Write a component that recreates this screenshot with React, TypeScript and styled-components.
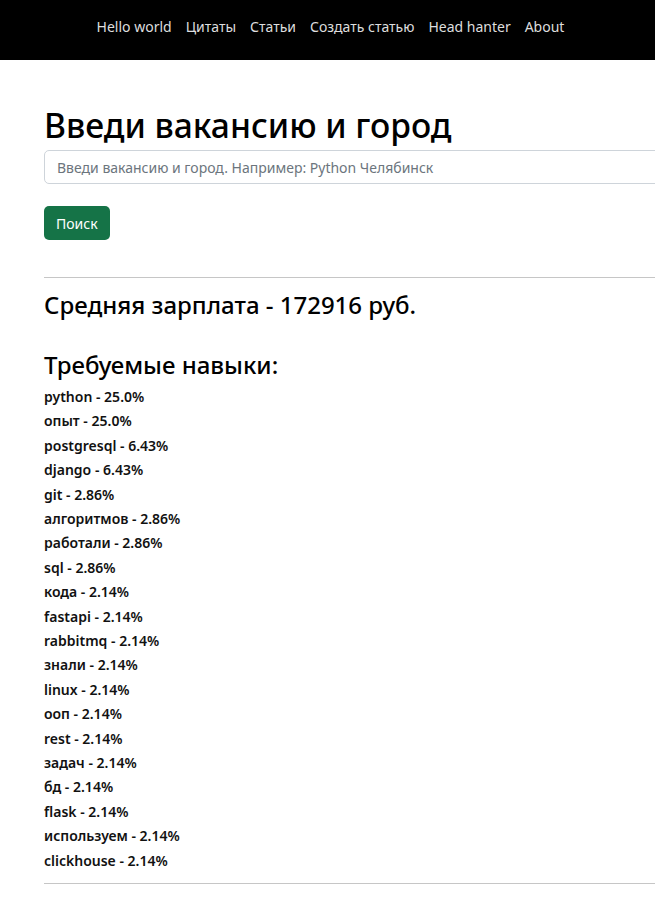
import React from 'react';
import styled, { createGlobalStyle } from 'styled-components';

const skills: [string, string][] = [
  ['python', '25.0%'],
  ['опыт', '25.0%'],
  ['postgresql', '6.43%'],
  ['django', '6.43%'],
  ['git', '2.86%'],
  ['алгоритмов', '2.86%'],
  ['работали', '2.86%'],
  ['sql', '2.86%'],
  ['кода', '2.14%'],
  ['fastapi', '2.14%'],
  ['rabbitmq', '2.14%'],
  ['знали', '2.14%'],
  ['linux', '2.14%'],
  ['ооп', '2.14%'],
  ['rest', '2.14%'],
  ['задач', '2.14%'],
  ['бд', '2.14%'],
  ['flask', '2.14%'],
  ['используем', '2.14%'],
  ['clickhouse', '2.14%'],
];

const navLinks = ['Hello world', 'Цитаты', 'Статьи', 'Создать статью', 'Head hanter', 'About'];

export default function App() {
  return (
    <>
      <GlobalStyle />
      <Navbar>
        {navLinks.map((l) => (
          <NavLink key={l} href="#">
            {l}
          </NavLink>
        ))}
      </Navbar>
      <Main>
        <Title>Введи вакансию и город</Title>
        <SearchForm onSubmit={(e) => e.preventDefault()}>
          <SearchInput placeholder="Введи вакансию и город. Например: Python Челябинск" />
          <SearchButton type="submit">Поиск</SearchButton>
        </SearchForm>
        <Divider $gap={37} />
        <Heading $gap={13}>Средняя зарплата - 172916 руб.</Heading>
        <Heading $gap={31}>Требуемые навыки:</Heading>
        <SkillList>
          {skills.map(([name, pct]) => (
            <Skill key={name}>
              {name} - {pct}
            </Skill>
          ))}
        </SkillList>
        <Divider $gap={10} />
      </Main>
    </>
  );
}

const GlobalStyle = createGlobalStyle`
  body {
    margin: 0;
    font-family: "Noto Sans", "DejaVu Sans", sans-serif;
    color: #212529;
    background: #fff;
  }
  * { box-sizing: border-box; }
`;

const Navbar = styled.nav`
  height: 60px;
  background: #000;
  display: flex;
  justify-content: center;
  align-items: flex-start;
  padding: 16px 0 0 6px;
  gap: 14px;
`;

const NavLink = styled.a`
  color: rgba(255, 255, 255, 0.88);
  text-decoration: none;
  font-size: 14px;
  line-height: 22px;
`;

const Main = styled.main`
  padding: 0 0 0 44px;
  width: 720px;
`;

const Title = styled.h1`
  margin: 45px 0 5px;
  font-size: 33.6px;
  font-weight: 500;
  line-height: 1.2;
  color: #000;
`;

const SearchForm = styled.form`
  display: flex;
  flex-direction: column;
  align-items: flex-start;
  gap: 22px;
`;

const SearchInput = styled.input`
  width: 100%;
  height: 34px;
  padding: 0 12px;
  border: 1px solid #ced4da;
  border-radius: 5px;
  font-family: inherit;
  font-size: 14px;
  color: #212529;
  &::placeholder {
    color: #6c757d;
  }
`;

const SearchButton = styled.button`
  height: 34px;
  padding: 0 12px;
  border: none;
  border-radius: 5px;
  background: #157347;
  color: #fff;
  font-family: inherit;
  font-size: 14px;
`;

const Divider = styled.hr<{ $gap: number }>`
  margin: ${(p) => p.$gap}px 0 0;
  border: 0;
  border-top: 1px solid #c6c6c6;
`;

const Heading = styled.h4<{ $gap: number }>`
  margin: ${(p) => p.$gap}px 0 0;
  font-size: 24px;
  font-weight: 500;
  line-height: 1.2;
  color: #000;
`;

const SkillList = styled.ul`
  list-style: none;
  margin: 5px 0 0;
  padding: 0;
`;

const Skill = styled.li`
  font-size: 14px;
  font-weight: 600;
  line-height: 24.4px;
  color: #111;
`;
